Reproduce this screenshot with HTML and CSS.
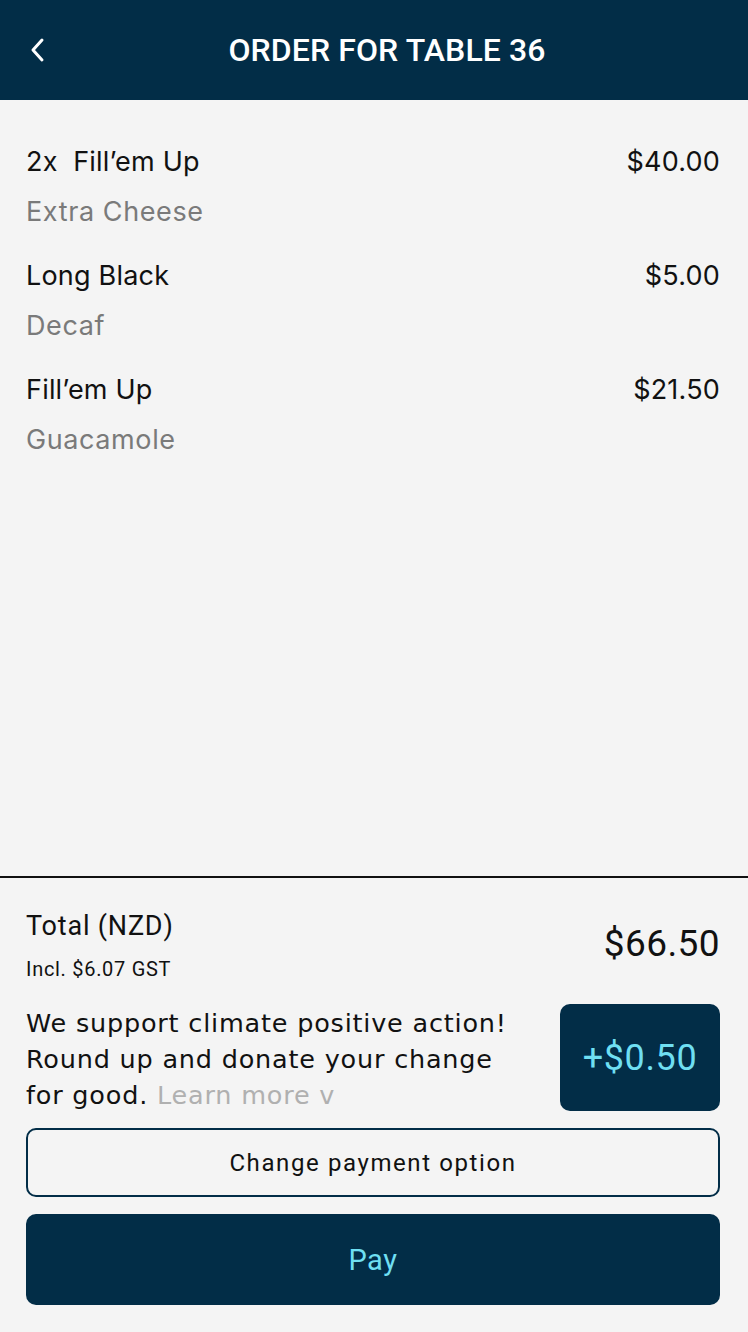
FILE: index.html
```html
<!DOCTYPE html>
<html>
<head>
<meta charset="utf-8">
<link rel="stylesheet" href="styles.css">
</head>
<body>
<div class="screen">
  <header class="topbar">
    <svg class="back" width="18" height="26" viewBox="0 0 18 26"><path d="M14 3 L5 13 L14 23" fill="none" stroke="#fff" stroke-width="3" stroke-linecap="round" stroke-linejoin="round"/></svg>
    <h1 class="title">ORDER FOR TABLE 36</h1>
    <span></span>
  </header>
  <main class="items">
    <div class="item">
      <div class="item-row"><span>2x&nbsp; Fill’em Up</span><span>$40.00</span></div>
      <div class="item-sub">Extra Cheese</div>
    </div>
    <div class="item">
      <div class="item-row"><span>Long Black</span><span>$5.00</span></div>
      <div class="item-sub">Decaf</div>
    </div>
    <div class="item">
      <div class="item-row"><span>Fill’em Up</span><span>$21.50</span></div>
      <div class="item-sub">Guacamole</div>
    </div>
  </main>
  <footer class="summary">
    <div class="total">
      <div class="total-left">
        <div class="total-label">Total (NZD)</div>
        <div class="total-gst">Incl. $6.07 GST</div>
      </div>
      <div class="total-amount">$66.50</div>
    </div>
    <div class="donate">
      <p class="donate-text">We support climate positive action! Round up and donate your change for&nbsp;good. <span class="learn">Learn more v</span></p>
      <button class="donate-btn">+$0.50</button>
    </div>
    <button class="btn-outline">Change payment option</button>
    <button class="btn-pay">Pay</button>
  </footer>
</div>
</body>
</html>
```
FILE: styles.css
```css
* { box-sizing: border-box; }
html, body { margin: 0; padding: 0; }
body {
  width: 748px;
  height: 1332px;
  background: #f4f4f4;
  font-family: Inter, "Noto Sans", sans-serif;
  color: #111;
}
.screen {
  display: flex;
  flex-direction: column;
  height: 1332px;
}
.topbar {
  height: 100px;
  background: #022d47;
  display: grid;
  grid-template-columns: 60px 1fr 34px;
  align-items: center;
}
.back { margin-left: 28px; }
.title {
  margin: 0;
  text-align: center;
  color: #fff;
  font-family: Roboto, Inter, sans-serif;
  font-weight: 500;
  font-size: 32px;
  letter-spacing: 0.1px;
}
.items {
  flex: 1;
  padding: 44px 28px 0 26px;
}
.item { margin-bottom: 28px; }
.item-row {
  display: flex;
  justify-content: space-between;
  font-size: 27px;
  line-height: 36px;
  letter-spacing: 0.2px;
  color: #111;
}
.item-sub {
  margin-top: 14px;
  font-size: 27px;
  line-height: 36px;
  letter-spacing: 0.6px;
  color: #7a7a7a;
}
.summary {
  border-top: 2px solid #111;
  padding: 32px 28px 27px 26px;
  display: flex;
  flex-direction: column;
}
.total {
  display: flex;
  justify-content: space-between;
  align-items: center;
}
.total-label {
  font-family: Roboto, Inter, sans-serif;
  font-size: 27px;
  line-height: 32px;
  letter-spacing: 0.8px;
}
.total-gst {
  font-family: Roboto, Inter, sans-serif;
  font-size: 20px;
  line-height: 24px;
  letter-spacing: 0.7px;
  margin-top: 15px;
}
.total-amount {
  font-family: Roboto, Inter, sans-serif;
  font-size: 37px;
  letter-spacing: 0.4px;
  margin-bottom: 4px;
}
.donate {
  display: flex;
  justify-content: space-between;
  align-items: flex-end;
  margin-top: 23px;
}
.donate-text {
  margin: 0;
  width: 520px;
  font-family: "DejaVu Sans", Inter, sans-serif;
  font-size: 25.5px;
  line-height: 36px;
  letter-spacing: 0.8px;
}
.learn { color: #b0b0b0; }
.donate-btn {
  width: 160px;
  height: 107px;
  margin-bottom: 2px;
  border: none;
  border-radius: 10px;
  background: #022d47;
  color: #6fdff2;
  font-family: Roboto, Inter, sans-serif;
  font-size: 36px;
  letter-spacing: 0.6px;
}
.btn-outline {
  margin-top: 15px;
  height: 69px;
  border: 2px solid #022d47;
  border-radius: 10px;
  background: transparent;
  font-family: Roboto, Inter, sans-serif;
  font-size: 24px;
  letter-spacing: 1.6px;
  color: #111;
}
.btn-pay {
  margin-top: 17px;
  height: 91px;
  border: none;
  border-radius: 10px;
  background: #022d47;
  color: #6fdff2;
  font-family: Roboto, Inter, sans-serif;
  font-size: 29px;
  letter-spacing: 0.6px;
}
```
